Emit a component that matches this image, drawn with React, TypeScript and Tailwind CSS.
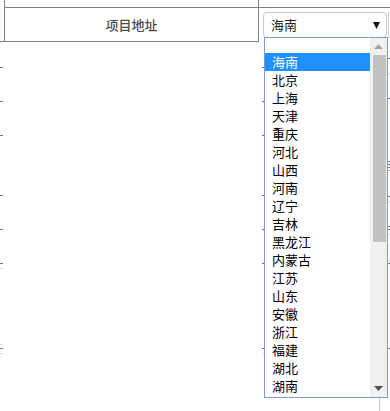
import React from "react";

const provinces = [
  "海南", "北京", "上海", "天津", "重庆", "河北", "山西", "河南", "辽宁", "吉林",
  "黑龙江", "内蒙古", "江苏", "山东", "安徽", "浙江", "福建", "湖北", "湖南",
];

const font = { fontFamily: '"Noto Sans CJK SC", "Noto Sans", sans-serif' };

export default function App() {
  return (
    <div className="relative w-[390px] h-[411px] overflow-hidden bg-white" style={font}>
      {/* table header */}
      <div className="flex h-[42px]">
        <div className="w-[4px] h-[42px] border-b border-[#808080]" />
        <div className="w-[256px] flex flex-col border-l border-r border-[#808080]">
          <div className="h-[8px] border-b border-[#808080]" />
          <div className="h-[34px] border-b border-[#808080] flex items-center justify-center text-[13px] leading-[18px] text-[#4a4a4a] font-medium">
            项目地址
          </div>
        </div>
        <div className="flex-1 flex flex-col">
          <div className="h-[8px] border-b border-[#808080]" />
          <div className="flex pt-[4px] pl-[4px]">
            <div className="w-[124px] h-[26px] rounded-[4px] border border-[#c8c8c8] flex items-center pl-[7px] pr-[6px] text-[13px] leading-[18px] text-[#222]">
              <span className="flex-1">海南</span>
              <svg width="7" height="7" viewBox="0 0 7 7" className="mt-[1px]">
                <path d="M0 0 L7 0 L3.5 7 Z" fill="#111" />
              </svg>
            </div>
            <div className="w-[2px] h-[26px] ml-[1px] border-l border-[#d0d0d0]" />
          </div>
        </div>
      </div>

      {/* body with leftover row ticks */}
      <div className="flex h-[369px]">
        <div className="w-[3px] flex flex-col">
          <div className="mt-[25px] h-px bg-[#777]" />
          <div className="mt-[33px] h-px bg-[#777]" />
          <div className="mt-[33px] h-px bg-[#777]" />
          <div className="mt-[59px] h-px bg-[#777]" />
          <div className="mt-[33px] h-px bg-[#777]" />
          <div className="mt-[33px] h-px bg-[#777]" />
          <div className="mt-[4px] h-px bg-[#ddd]" />
          <div className="mt-[75px] h-px bg-[#ddd]" />
          <div className="mt-[3px] h-px bg-[#777]" />
          <div className="mt-[4px] h-px bg-[#ddd]" />
        </div>
        <div className="w-[259px]" />
        <div className="w-[2px] flex flex-col">
          <div className="mt-[25px] h-px bg-[#777]" />
          <div className="mt-[33px] h-px bg-[#777]" />
          <div className="mt-[33px] h-px bg-[#777]" />
          <div className="mt-[59px] h-px bg-[#777]" />
          <div className="mt-[33px] h-px bg-[#777]" />
          <div className="mt-[33px] h-px bg-[#777]" />
          <div className="mt-[84px] h-px bg-[#777]" />
          <div className="mt-[4px] h-px bg-[#ddd]" />
        </div>
        <div className="w-[124px] flex flex-col">
          <div className="h-[356px]" />
          <div className="ml-[115px] w-px h-[13px] bg-[#c8c8c8]" />
        </div>
        <div className="w-[2px] flex flex-col">
          <div className="mt-[16px] h-px bg-[#777]" />
          <div className="mt-[14px] h-px bg-[#ddd]" />
          <div className="mt-[24px] h-px bg-[#777]" />
          <div className="mt-[62px] h-px bg-[#777]" />
          <div className="mt-[2px] h-px bg-[#777]" />
          <div className="mt-[2px] h-px bg-[#777]" />
          <div className="mt-[2px] h-px bg-[#aaa]" />
          <div className="mt-[25px] h-px bg-[#777]" />
          <div className="mt-[4px] h-px bg-[#ddd]" />
          <div className="mt-[24px] h-px bg-[#777]" />
          <div className="mt-[2px] h-px bg-[#777]" />
          <div className="mt-[4px] h-px bg-[#ddd]" />
          <div className="mt-[25px] h-px bg-[#ddd]" />
          <div className="mt-[2px] h-px bg-[#777]" />
          <div className="mt-[84px] h-px bg-[#777]" />
        </div>
      </div>

      {/* open dropdown list (overlay) */}
      <div className="absolute left-[264px] top-[37px] w-[124px] h-[361px] border border-[#7a9cd2] bg-white flex overflow-hidden">
        <div className="flex-1 flex flex-col overflow-hidden">
          <div className="h-[15px] shrink-0" />
          {provinces.map((p, i) => (
            <div
              key={p}
              className={
                i === 0
                  ? "h-[18px] shrink-0 pl-[7px] text-[13px] leading-[18px] bg-[#1e90ff] text-white"
                  : "h-[18px] shrink-0 pl-[7px] text-[13px] leading-[18px] text-black"
              }
            >
              {p}
            </div>
          ))}
        </div>
        <div className="w-[17px] bg-[#f0f0f0] flex flex-col items-center">
          <div className="h-[17px] w-full flex items-center justify-center">
            <svg width="9" height="5" viewBox="0 0 9 5">
              <path d="M0 5 L4.5 0 L9 5 Z" fill="#a3a3a3" />
            </svg>
          </div>
          <div className="ml-[1px] w-[13px] h-[187px] bg-[#c1c1c1]" />
          <div className="flex-1" />
          <div className="h-[17px] w-full flex items-center justify-center">
            <svg width="9" height="5" viewBox="0 0 9 5">
              <path d="M0 0 L9 0 L4.5 5 Z" fill="#505050" />
            </svg>
          </div>
        </div>
      </div>
    </div>
  );
}
